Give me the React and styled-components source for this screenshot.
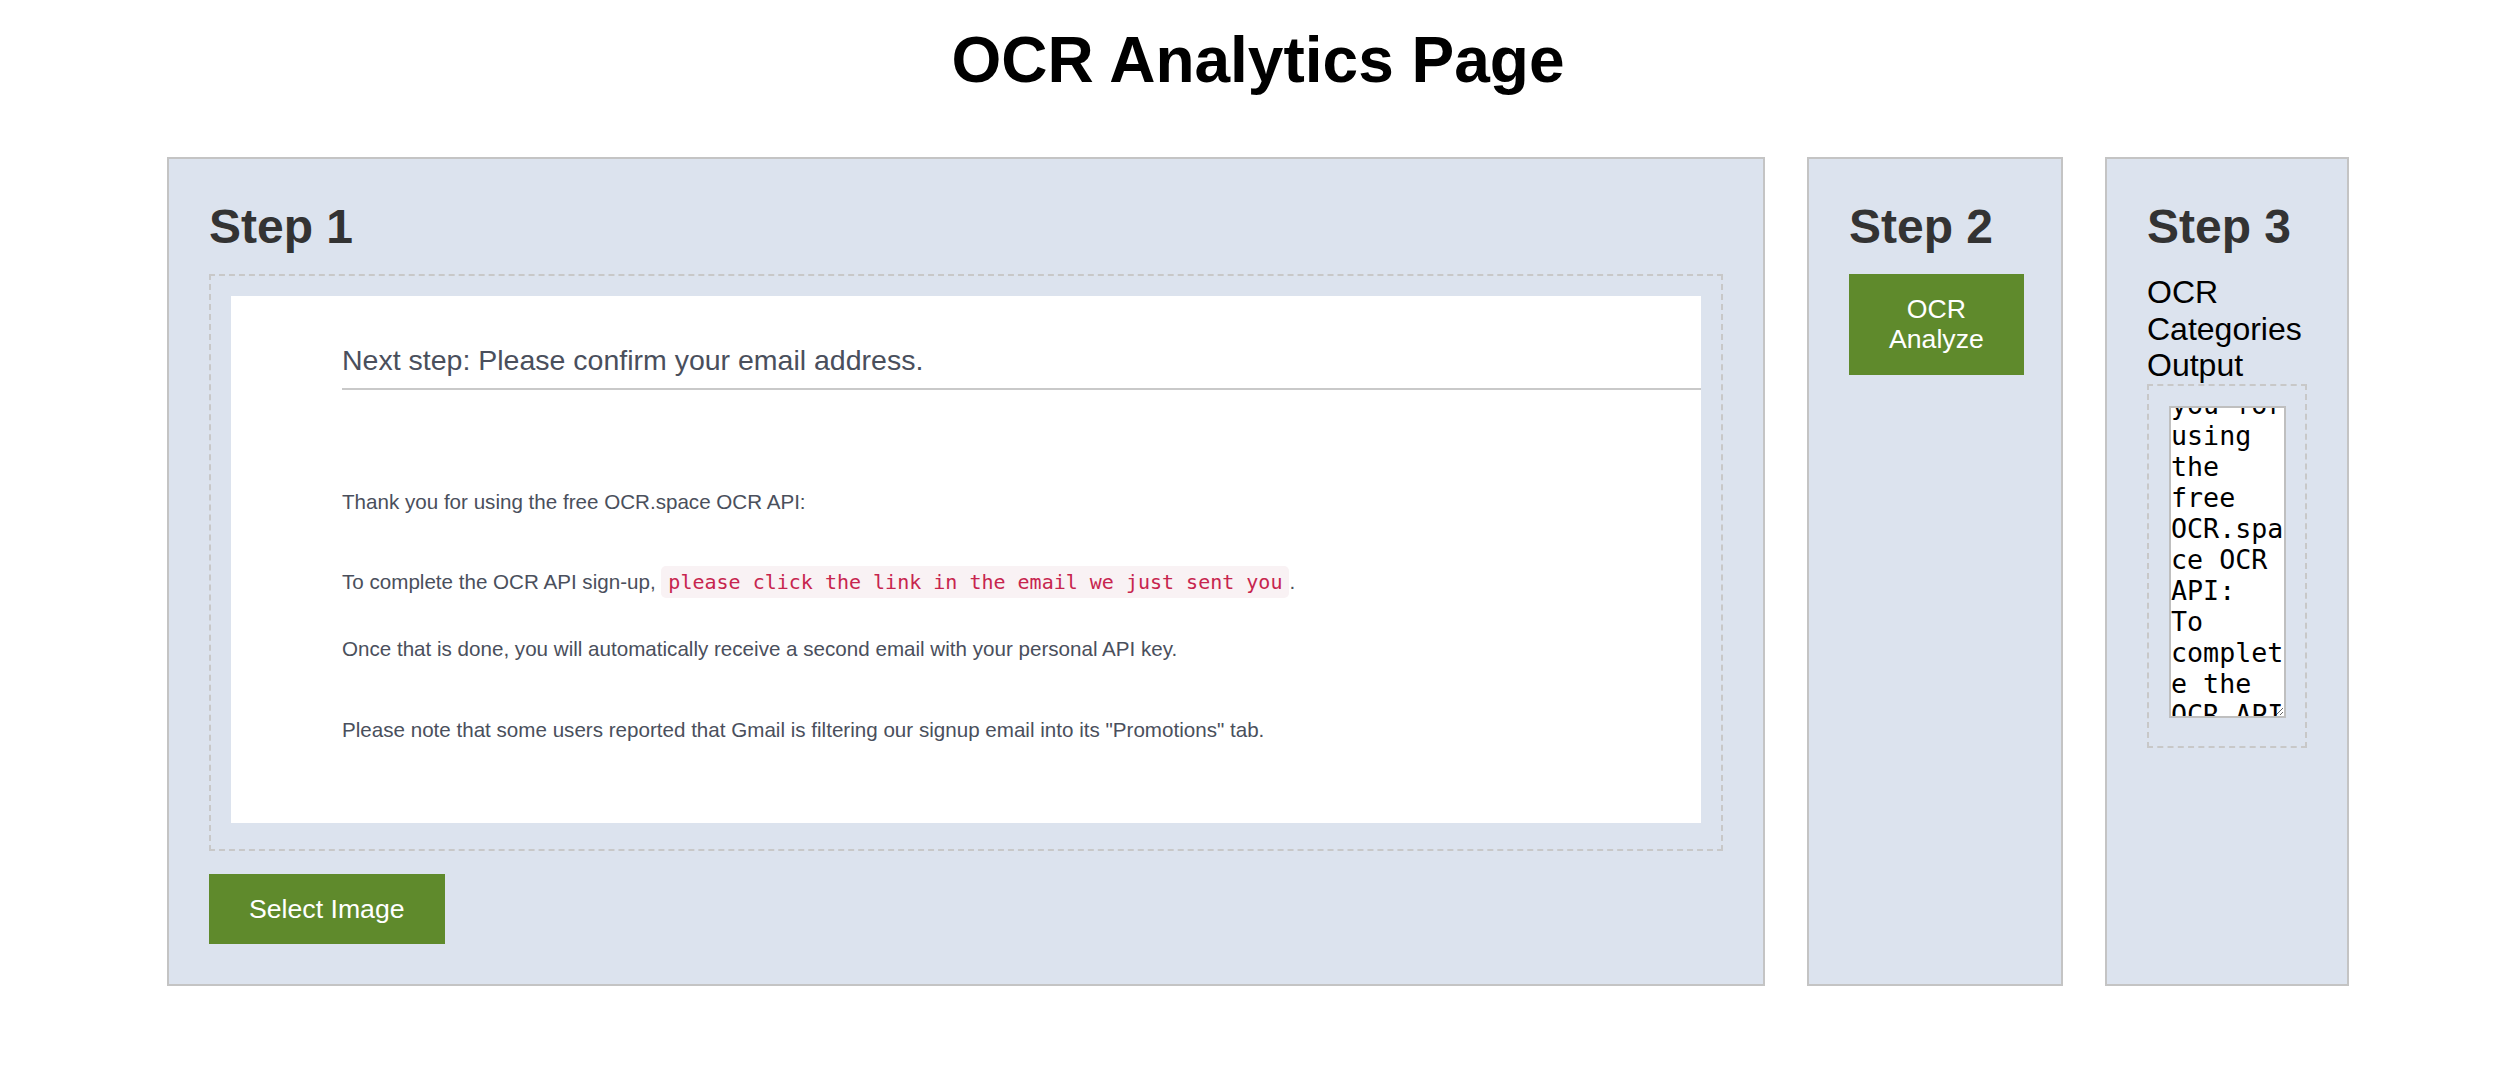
import React, { useEffect, useRef } from 'react'
import styled, { createGlobalStyle } from 'styled-components'

const GlobalStyle = createGlobalStyle`
  html, body {
    margin: 0;
    padding: 0;
    background: #ffffff;
  }
  body {
    font-family: "Liberation Sans", Arial, sans-serif;
    color: #000;
  }
`

const OCR_TEXT =
  'Thank you for using the free OCR.space OCR API:\n' +
  'To complete the OCR API sign-up, please click the link in the email we just sent you.\n' +
  'Once that is done, you will automatically receive a second email with your personal API key.\n' +
  'Please note that some users reported that Gmail is filtering our signup email into its "Promotions" tab.'

const App = () => {
  const outputRef = useRef(null)

  useEffect(() => {
    // the output box is shown scrolled a little way down
    if (outputRef.current) outputRef.current.scrollTop = 50
  }, [])

  return (
    <>
      <GlobalStyle />
      <Title>OCR Analytics Page</Title>
      <Layout>
        <Panel>
          <StepTitle>Step 1</StepTitle>
          <DropZone>
            <Preview>
              <PreviewHeading>Next step: Please confirm your email address.</PreviewHeading>
              <PreviewText $top={100}>Thank you for using the free OCR.space OCR API:</PreviewText>
              <PreviewText $top={56}>
                To complete the OCR API sign-up, <Code>please click the link in the email we just sent you</Code>.
              </PreviewText>
              <PreviewText $top={43}>
                Once that is done, you will automatically receive a second email with your personal API key.
              </PreviewText>
              <PreviewText $top={57}>
                Please note that some users reported that Gmail is filtering our signup email into its "Promotions" tab.
              </PreviewText>
            </Preview>
          </DropZone>
          <ActionButton $top={23}>Select Image</ActionButton>
        </Panel>

        <Panel>
          <StepTitle>Step 2</StepTitle>
          <ActionButton>OCR Analyze</ActionButton>
        </Panel>

        <Panel>
          <StepTitle>Step 3</StepTitle>
          <OutputLabel>OCR Categories Output</OutputLabel>
          <OutputBox>
            <Output ref={outputRef} defaultValue={OCR_TEXT} />
          </OutputBox>
        </Panel>
      </Layout>
    </>
  )
}

const Title = styled.h1`
  margin: 0;
  padding: 24px 0 59px;
  text-align: center;
  font-size: 64px;
  font-weight: 700;
  line-height: 1.15;
  color: #000;
`

const Layout = styled.div`
  display: grid;
  grid-template-columns: 1598px 256px 244px;
  column-gap: 42px;
  justify-content: center;
  align-items: stretch;
`

const Panel = styled.div`
  box-sizing: border-box;
  padding: 40px;
  background: #dce3ee;
  border: 2px solid #c4c4c4;
  min-width: 0;
`

const StepTitle = styled.h2`
  margin: 0 0 20px;
  font-size: 48px;
  font-weight: 700;
  line-height: 1.15;
  color: #333333;
`

const DropZone = styled.div`
  padding: 20px 20px 26px;
  border: 2px dashed #c8c8c8;
`

const Preview = styled.div`
  height: 527px;
  box-sizing: border-box;
  padding: 48px 0 0 111px;
  background: #ffffff;
  overflow: hidden;
  color: #4a4f5c;
`

const PreviewHeading = styled.div`
  font-size: 28.5px;
  line-height: 33px;
  padding-bottom: 11px;
  border-bottom: 2px solid #c9c9c9;
`

const PreviewText = styled.p`
  margin: ${(p) => p.$top}px 0 0;
  font-size: 20.6px;
  line-height: 24px;
`

const Code = styled.code`
  font-family: "DejaVu Sans Mono", "Liberation Mono", monospace;
  font-size: 20px;
  padding: 4px 7px;
  border-radius: 5px;
  color: #c7254e;
  background: #f9f2f4;
`

const ActionButton = styled.button`
  display: inline-block;
  margin-top: ${(p) => p.$top || 0}px;
  padding: 20px 40px;
  border: none;
  background: #5f8a2c;
  color: #ffffff;
  font-family: "Liberation Sans", Arial, sans-serif;
  font-size: 26.67px;
  line-height: 1.15;
  text-align: center;
  cursor: pointer;
`

const OutputLabel = styled.div`
  font-size: 32px;
  line-height: 1.15;
  color: #000;
`

const OutputBox = styled.div`
  padding: 20px 20px 28px;
  border: 2px dashed #c8c8c8;
`

const Output = styled.textarea`
  display: block;
  box-sizing: border-box;
  width: 117px;
  height: 312px;
  margin: 0;
  padding: 0;
  border: 2px solid #bfbfbf;
  background: #ffffff;
  color: #000;
  font-family: "DejaVu Sans Mono", "Liberation Mono", monospace;
  font-size: 26.67px;
  scrollbar-width: none;
`

export default App
